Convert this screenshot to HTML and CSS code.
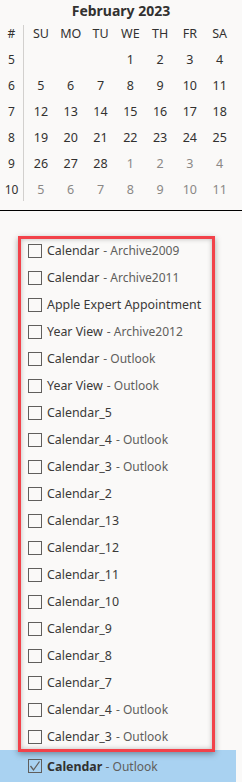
FILE: index.html
```html
<!DOCTYPE html>
<html lang="en">
<head>
  <meta charset="UTF-8" />
  <title>Calendars</title>
  <link rel="stylesheet" href="styles.css">
</head>
<body>
  <div class="month">
    <h1>February 2023</h1>
    <div class="cal">
      <div class="weeks">
        <div>#</div><div>5</div><div>6</div><div>7</div><div>8</div><div>9</div><div>10</div>
      </div>
      <div class="days">
        <div>SU</div><div>MO</div><div>TU</div><div>WE</div><div>TH</div><div>FR</div><div>SA</div>
        <div></div><div></div><div></div><div>1</div><div>2</div><div>3</div><div>4</div>
        <div>5</div><div>6</div><div>7</div><div>8</div><div>9</div><div>10</div><div>11</div>
        <div>12</div><div>13</div><div>14</div><div>15</div><div>16</div><div>17</div><div>18</div>
        <div>19</div><div>20</div><div>21</div><div>22</div><div>23</div><div>24</div><div>25</div>
        <div>26</div><div>27</div><div>28</div><div class="other">1</div><div class="other">2</div><div class="other">3</div><div class="other">4</div>
        <div class="other">5</div><div class="other">6</div><div class="other">7</div><div class="other">8</div><div class="other">9</div><div class="other">10</div><div class="other">11</div>
      </div>
    </div>
  </div>

  <div class="divider"></div>

  <ul class="calendars">
    <li><span class="box"></span>Calendar <span class="sub">- Archive2009</span></li>
    <li><span class="box"></span>Calendar <span class="sub">- Archive2011</span></li>
    <li><span class="box"></span>Apple Expert Appointment</li>
    <li><span class="box"></span>Year View <span class="sub">- Archive2012</span></li>
    <li><span class="box"></span>Calendar <span class="sub">- Outlook</span></li>
    <li><span class="box"></span>Year View <span class="sub">- Outlook</span></li>
    <li><span class="box"></span>Calendar_5</li>
    <li><span class="box"></span>Calendar_4 <span class="sub">- Outlook</span></li>
    <li><span class="box"></span>Calendar_3 <span class="sub">- Outlook</span></li>
    <li><span class="box"></span>Calendar_2</li>
    <li><span class="box"></span>Calendar_13</li>
    <li><span class="box"></span>Calendar_12</li>
    <li><span class="box"></span>Calendar_11</li>
    <li><span class="box"></span>Calendar_10</li>
    <li><span class="box"></span>Calendar_9</li>
    <li><span class="box"></span>Calendar_8</li>
    <li><span class="box"></span>Calendar_7</li>
    <li><span class="box"></span>Calendar_4 <span class="sub">- Outlook</span></li>
    <li><span class="box"></span>Calendar_3 <span class="sub">- Outlook</span></li>
    <li class="selected">
      <span class="box"><svg width="12" height="12" viewBox="0 0 12 12"><polyline points="1.5,6 4.5,10 10.5,1.5" fill="none" stroke="#605e5c" stroke-width="1.3"/></svg></span><b>Calendar</b>&nbsp;<span class="sub">- Outlook</span>
    </li>
    <div class="highlight"></div>
  </ul>
</body>
</html>
```

FILE: styles.css
```css
body {
  margin: 0;
  background: #faf9f8;
  font-family: 'Noto Sans', 'Open Sans', sans-serif;
  color: #323130;
  overflow: hidden;
}

h1 {
  margin: 0;
  padding-top: 1px;
  height: 20px;
  text-align: center;
  font-size: 14px;
  line-height: 20px;
  font-weight: 700;
  color: #323130;
}

.cal {
  display: flex;
  font-size: 12.5px;
}

.weeks {
  width: 23px;
  background: linear-gradient(#d2d0ce, #d2d0ce) right 0 top 4px / 1px 176px no-repeat;
  padding-right: 1px;
}

.weeks div {
  height: 26px;
  line-height: 26px;
  text-align: center;
  font-size: 12px;
}

.days {
  margin-left: 2px;
  display: grid;
  grid-template-columns: repeat(7, 29.8px);
  grid-auto-rows: 26px;
}

.days div {
  line-height: 26px;
  text-align: center;
}

.days .other {
  color: #8a8886;
}

.divider {
  margin-top: 7px;
  height: 1px;
  background: #000;
}

.calendars {
  position: relative;
  list-style: none;
  margin: 26px 0 0;
  padding: 0;
}

.calendars li {
  display: flex;
  align-items: center;
  height: 27px;
  padding-left: 28px;
  font-size: 12.4px;
  color: #3b3a39;
  white-space: nowrap;
}

.calendars .sub {
  font-size: 12px;
  color: #605e5c;
  margin-left: 4px;
}

.box {
  flex: 0 0 auto;
  width: 12px;
  height: 12px;
  border: 1px solid #605e5c;
  margin-right: 5px;
  display: flex;
  align-items: center;
  justify-content: center;
}

.calendars .selected {
  height: 32px;
  margin-right: 6px;
  background: #a9d2f1;
}

.selected b {
  font-weight: 700;
  color: #323130;
}

.selected .sub {
  margin-left: 0;
}

.highlight {
  position: absolute;
  left: 18px;
  top: -1px;
  width: 197px;
  height: 516px;
  box-sizing: border-box;
  border: 3px solid #f2424a;
  box-shadow: 0 2px 6px rgba(0, 0, 0, 0.35), inset 0 0 5px rgba(0, 0, 0, 0.25);
}
```
